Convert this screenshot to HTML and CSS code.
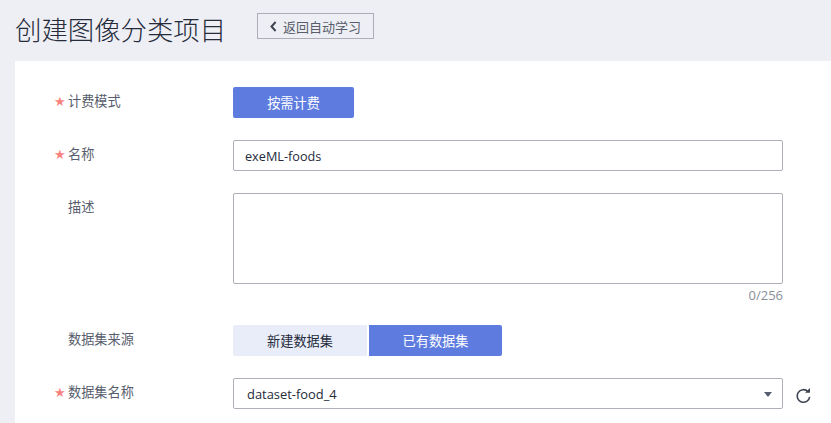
FILE: index.html
```
<!DOCTYPE html>
<html lang="zh">
<head>
<meta charset="utf-8">
<title>创建图像分类项目</title>
<link rel="stylesheet" href="styles.css">
</head>
<body>
<header class="head">
  <h1 class="title">创建图像分类项目</h1>
  <a class="back"><svg class="back-icon" width="7" height="11" viewBox="0 0 7 11"><path d="M5.6 1 1.500 5.500l4.100 4.500" fill="none" stroke="#3f4553" stroke-width="2"/></svg>返回自动学习</a>
</header>
<main class="card">
  <div class="row row-mode">
    <label class="label req">计费模式</label>
    <button class="btn primary single">按需计费</button>
  </div>
  <div class="row row-name">
    <label class="label req">名称</label>
    <div class="input name">exeML-foods</div>
  </div>
  <div class="row row-desc">
    <label class="label">描述</label>
    <div class="desc-col">
      <div class="textarea"></div>
      <div class="count">0/256</div>
    </div>
  </div>
  <div class="row row-source">
    <label class="label">数据集来源</label>
    <div class="seg">
      <button class="btn light">新建数据集</button>
      <button class="btn primary">已有数据集</button>
    </div>
  </div>
  <div class="row row-ds">
    <label class="label req">数据集名称</label>
    <div class="input select">dataset-food_4<span class="caret"></span></div>
    <svg class="refresh" width="17" height="17" viewBox="0 0 17 17"><path d="M12.900 4.500A6.300 6.300 0 1 0 14.700 9.800" fill="none" stroke="#3f4553" stroke-width="1.600"/><path d="M10 5.800h5V1z" fill="#3f4553"/></svg>
  </div>
</main>
</body>
</html>
```
FILE: styles.css
```
* { box-sizing: border-box; }
html, body { margin: 0; height: 423px; overflow: hidden; }
body {
  background: #eeeff4;
  font-family: "Open Sans", "Noto Sans CJK SC", sans-serif;
  color: #252b3a;
  padding-left: 15px;
}
.head {
  height: 61px;
  display: flex;
  align-items: flex-start;
}
.title {
  margin: 10px 30.800px 0 0;
  font-family: "Noto Sans CJK SC", sans-serif;
  font-size: 26.400px;
  line-height: 38px;
  font-weight: 300;
  color: #252b3a;
  white-space: nowrap;
}
.back {
  margin-top: 13px;
  width: 117px;
  height: 26px;
  border: 1px solid #aeaeb6;
  display: flex;
  align-items: center;
  padding-left: 12px;
  gap: 6px;
  font-family: "Noto Sans CJK SC", sans-serif;
  font-size: 13px;
  color: #575d6c;
}
.back-icon { flex: none; }
.card {
  background: #fff;
  height: 362px;
  padding-top: 26px;
}
.row { display: flex; align-items: flex-start; }
.row-mode { height: 53px; }
.row-name { height: 53px; }
.row-desc { height: 132px; }
.row-source { height: 53px; }
.label {
  width: 218px;
  padding-left: 53px;
  font-family: "Noto Sans CJK SC", sans-serif;
  font-size: 13.200px;
  line-height: 28px;
  color: #575d6c;
  position: relative;
  flex: none;
}
.req::before {
  content: "★";
  position: absolute;
  left: 39px;
  top: 1px;
  font-family: "DejaVu Sans", sans-serif;
  font-size: 13px;
  line-height: 28px;
  color: #f8837e;
}
.btn {
  border: 0;
  border-radius: 2px;
  height: 31px;
  font-family: "Noto Sans CJK SC", sans-serif;
  font-size: 13.200px;
  padding: 0;
  display: block;
}
.primary { background: #5e7ce0; color: #fff; }
.light { background: #e9edf9; color: #252b3a; }
.single { width: 121px; }
.input {
  width: 550px;
  height: 31px;
  border: 1px solid #adb0b8;
  border-radius: 2px;
  padding-left: 12px;
  font-size: 13px;
  line-height: 30px;
  color: #252b3a;
  background: #fff;
}
.name { padding-left: 11px; font-size: 12.700px; }
.desc-col { width: 550px; }
.textarea {
  height: 91px;
  border: 1px solid #adb0b8;
  border-radius: 2px;
}
.count {
  text-align: right;
  font-size: 13px;
  line-height: 22px;
  color: #8a8e99;
}
.seg { display: flex; gap: 2px; }
.seg .btn { width: 134px; }
.seg .light { border-radius: 2px 0 0 2px; }
.seg .primary { border-radius: 0 2px 2px 0; width: 133px; }
.select {
  position: relative;
  padding-left: 13px;
  font-size: 12.900px;
}
.caret {
  position: absolute;
  right: 10px;
  top: 13px;
  border-left: 4px solid transparent;
  border-right: 4px solid transparent;
  border-top: 5px solid #575d6c;
}
.refresh { margin: 9px 0 0 12px; flex: none; }
```
